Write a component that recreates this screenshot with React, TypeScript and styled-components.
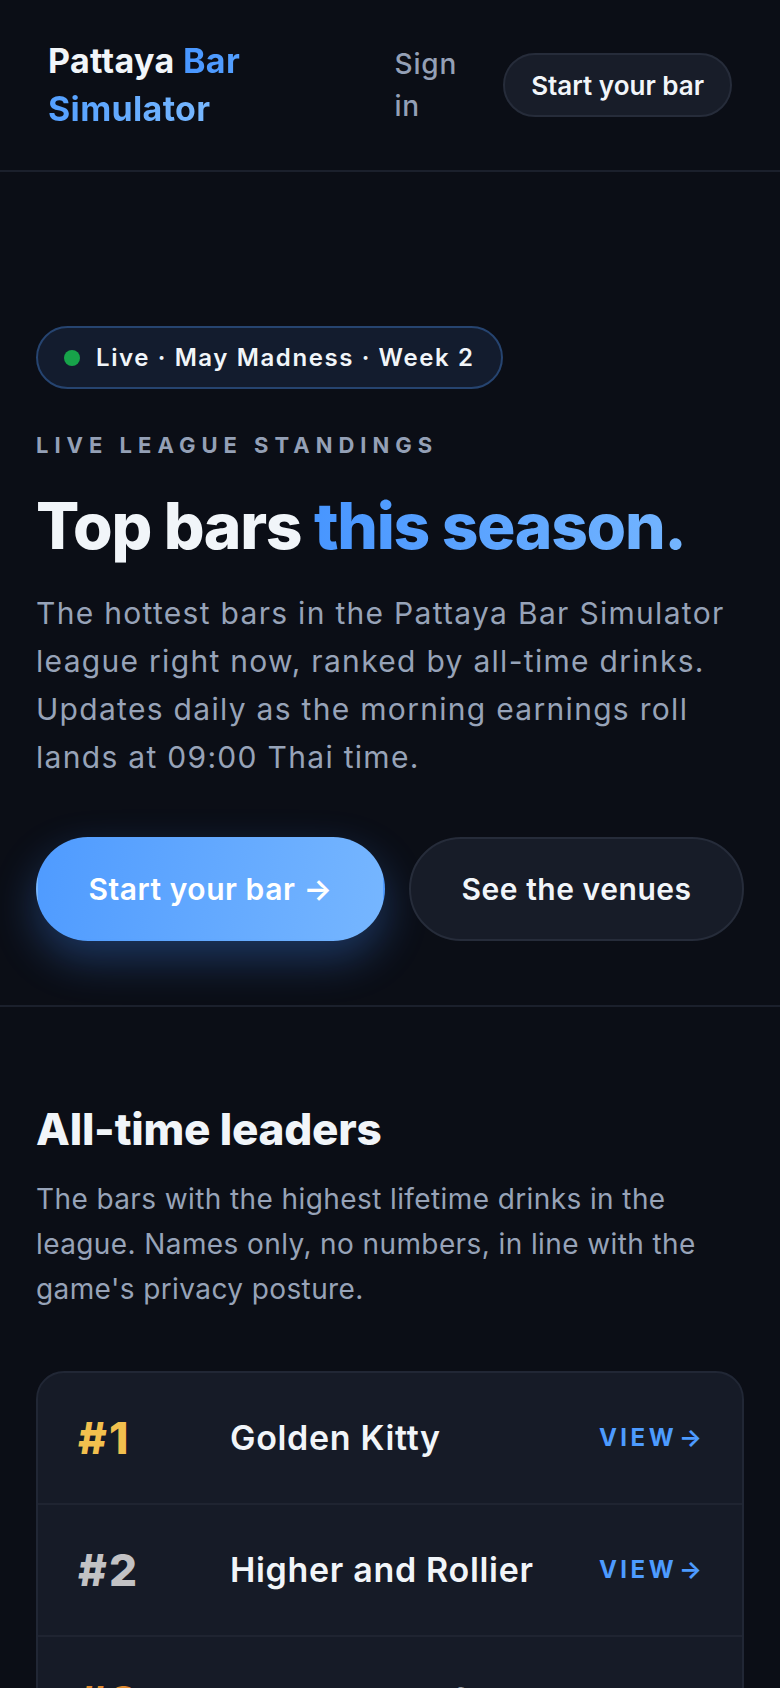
import React from "react";
import styled, { createGlobalStyle } from "styled-components";

const Global = createGlobalStyle`
  html, body { margin: 0; padding: 0; background: #0b0e16; }
  body {
    font-family: Inter, "Noto Sans", sans-serif;
    color: #f1f5f9;
    -webkit-font-smoothing: antialiased;
  }
  * { box-sizing: border-box; }
  a { text-decoration: none; }
`;

const Page = styled.div`
  min-height: 100vh;
  background: #0b0e16;
`;

const Header = styled.header`
  height: 172px;
  border-bottom: 2px solid #1b202c;
  padding: 0 48px;
  display: flex;
  align-items: center;
  justify-content: space-between;
`;

const Logo = styled.a`
  display: block;
  max-width: 260px;
  font-size: 34px;
  font-weight: 700;
  line-height: 1.4;
  letter-spacing: 0.01em;
  color: #f1f5f9;
`;

const LogoAccent = styled.span`
  background: linear-gradient(90deg, #4896ff 0%, #5aa4ff 40%, #78b8ff 100%);
  -webkit-background-clip: text;
  background-clip: text;
  color: transparent;
`;

const Nav = styled.nav`
  display: flex;
  align-items: center;
  gap: 46px;
`;

const SignIn = styled.a`
  width: min-content;
  font-size: 28px;
  font-weight: 500;
  line-height: 1.5;
  letter-spacing: 0.03em;
  color: #94a0b6;
`;

const NavButton = styled.a`
  display: inline-flex;
  align-items: center;
  height: 64px;
  padding: 0 26px;
  border-radius: 999px;
  background: #181d29;
  border: 2px solid #262c3a;
  color: #f1f5f9;
  font-size: 26px;
  font-weight: 600;
  letter-spacing: 0;
  white-space: nowrap;
`;

const Hero = styled.section`
  padding: 154px 36px 64px;
  border-bottom: 2px solid #1b202c;
`;

const Badge = styled.div`
  display: inline-flex;
  align-items: center;
  gap: 16px;
  height: 63px;
  padding: 0 26px;
  border-radius: 999px;
  background: #131c2e;
  border: 2px solid #264470;
  font-size: 24px;
  font-weight: 600;
  letter-spacing: 1.6px;
  color: #f1f5f9;
`;

const Dot = styled.span`
  width: 16px;
  height: 16px;
  border-radius: 50%;
  background: #17a34a;
  flex: none;
`;

const Eyebrow = styled.p`
  margin: 40px 0 29px;
  font-size: 22px;
  line-height: 33px;
  font-weight: 700;
  letter-spacing: 6px;
  text-transform: uppercase;
  color: #94a0b6;
`;

const Title = styled.h1`
  margin: 0;
  font-size: 64px;
  line-height: 1.1;
  font-weight: 800;
  letter-spacing: -0.02em;
  color: #f1f5f9;
`;

const Accent = styled.span`
  background: linear-gradient(90deg, #4896ff 0%, #74b5ff 100%);
  -webkit-background-clip: text;
  background-clip: text;
  color: transparent;
`;

const Lead = styled.p`
  margin: 28px 0 0;
  font-size: 30px;
  line-height: 48px;
  font-weight: 400;
  letter-spacing: 1.3px;
  color: #97a3b8;
`;

const Actions = styled.div`
  display: flex;
  gap: 24px;
  margin-top: 56px;
`;

const Button = styled.a<{ $primary?: boolean }>`
  flex: 1 1 auto;
  display: inline-flex;
  align-items: center;
  justify-content: center;
  height: 104px;
  padding: 0 48px;
  border-radius: 999px;
  font-size: 30px;
  font-weight: 600;
  letter-spacing: 0.018em;
  white-space: nowrap;
  color: ${(p) => (p.$primary ? "#ffffff" : "#f1f5f9")};
  background: ${(p) =>
    p.$primary ? "linear-gradient(100deg, #4f9bff 0%, #76b6ff 100%)" : "#171c28"};
  border: 2px solid ${(p) => (p.$primary ? "transparent" : "#262c3a")};
  box-shadow: ${(p) =>
    p.$primary ? "0 18px 44px rgba(64, 140, 255, 0.32)" : "none"};
`;

const Leaders = styled.section`
  padding: 96px 36px 96px;
`;

const SectionTitle = styled.h2`
  margin: 0 0 21px;
  font-size: 44px;
  line-height: 1.2;
  font-weight: 800;
  letter-spacing: -0.005em;
  color: #f1f5f9;
`;

const SectionText = styled.p`
  margin: 0 0 59px;
  font-size: 28px;
  line-height: 1.6;
  letter-spacing: 0.4px;
  color: #97a3b8;
`;

const Card = styled.div`
  border: 2px solid #212735;
  border-radius: 28px;
  background: #161b27;
  overflow: hidden;
`;

const Row = styled.div`
  display: grid;
  grid-template-columns: 120px 1fr auto;
  column-gap: 32px;
  align-items: center;
  padding: 40px 40px;
  & + & { border-top: 2px solid #1f2431; }
`;

const Rank = styled.span<{ $color: string }>`
  font-size: 44px;
  line-height: 50px;
  font-weight: 800;
  letter-spacing: 0.05em;
  color: ${(p) => p.$color};
`;

const Name = styled.span`
  font-size: 34px;
  font-weight: 600;
  letter-spacing: 0.02em;
  color: #f1f5f9;
`;

const View = styled.a`
  display: inline-flex;
  align-items: center;
  font-size: 24px;
  font-weight: 700;
  letter-spacing: 0.146em;
  color: #4d9bff;
`;

const ViewArrow = styled.span`
  margin-left: 2px;
  letter-spacing: 0;
`;

const leaders = [
  { rank: 1, name: "Golden Kitty", color: "#f2c04e" },
  { rank: 2, name: "Higher and Rollier", color: "#c2c2c4" },
  { rank: 3, name: "Tequila Riverfire", color: "#df8a2f" },
  { rank: 4, name: "Soi 6 Sunset", color: "#94a0b6" },
  { rank: 5, name: "Neon Lagoon", color: "#94a0b6" },
];

export default function App() {
  return (
    <Page>
      <Global />
      <Header>
        <Logo href="#">
          Pattaya <LogoAccent>Bar Simulator</LogoAccent>
        </Logo>
        <Nav>
          <SignIn href="#">Sign in</SignIn>
          <NavButton href="#">Start your bar</NavButton>
        </Nav>
      </Header>

      <Hero>
        <Badge>
          <Dot />
          Live · May Madness · Week 2
        </Badge>
        <Eyebrow>Live league standings</Eyebrow>
        <Title>
          Top bars <Accent>this season.</Accent>
        </Title>
        <Lead>
          The hottest bars in the Pattaya Bar Simulator league right now, ranked by
          all-time drinks. Updates daily as the morning earnings roll lands at 09:00
          Thai time.
        </Lead>
        <Actions>
          <Button $primary href="#">
            Start your bar →
          </Button>
          <Button href="#">See the venues</Button>
        </Actions>
      </Hero>

      <Leaders>
        <SectionTitle>All-time leaders</SectionTitle>
        <SectionText>
          The bars with the highest lifetime drinks in the league. Names only, no
          numbers, in line with the game's privacy posture.
        </SectionText>
        <Card>
          {leaders.map((l) => (
            <Row key={l.rank}>
              <Rank $color={l.color}>#{l.rank}</Rank>
              <Name>{l.name}</Name>
              <View href="#">
                VIEW<ViewArrow>→</ViewArrow>
              </View>
            </Row>
          ))}
        </Card>
      </Leaders>
    </Page>
  );
}
